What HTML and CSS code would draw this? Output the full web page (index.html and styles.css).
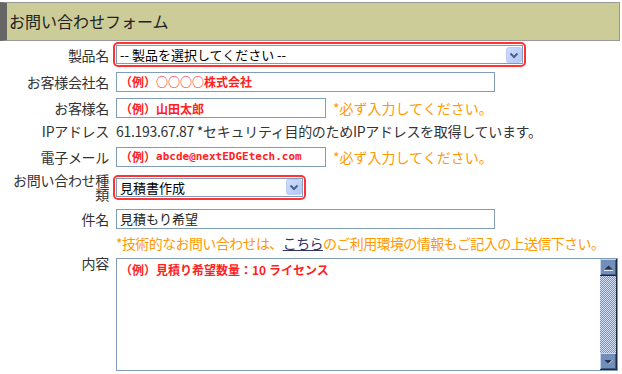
FILE: index.html
```html
<!DOCTYPE html>
<html lang="ja">
<head>
  <meta charset="UTF-8">
  <meta name="viewport" content="width=device-width, initial-scale=1.0">
  <link rel="stylesheet" href="styles.css">
</head>
<body>

  <h2 class="form-title">お問い合わせフォーム</h2>

  <form class="inquiry">
    <label class="label">製品名</label>
    <div class="field">
      <span class="required-box">
        <select class="select select-product">
          <option>-- 製品を選択してください --</option>
        </select>
      </span>
    </div>

    <label class="label">お客様会社名</label>
    <div class="field">
      <input class="text text-wide" type="text" placeholder="（例）○○○○株式会社">
    </div>

    <label class="label">お客様名</label>
    <div class="field">
      <input class="text text-short" type="text" placeholder="（例）山田太郎">
      <span class="must">*必ず入力してください。</span>
    </div>

    <label class="label">IPアドレス</label>
    <div class="field">
      <span class="ip">61.193.67.87 *セキュリティ目的のためIPアドレスを取得しています。</span>
    </div>

    <label class="label">電子メール</label>
    <div class="field">
      <span class="text text-short text-mail">
        <span class="mail-ex">（例）</span>abcde@nextEDGEtech.com
      </span>
      <span class="must">*必ず入力してください。</span>
    </div>

    <label class="label label-wrap">お問い合わせ種類</label>
    <div class="field">
      <span class="required-box">
        <select class="select select-kind">
          <option>見積書作成</option>
        </select>
      </span>
    </div>

    <label class="label">件名</label>
    <div class="field">
      <input class="text text-wide text-filled" type="text" value="見積もり希望">
    </div>

    <span class="label"></span>
    <div class="field">
      <span class="must note">*技術的なお問い合わせは、<a class="link" href="#">こちら</a>のご利用環境の情報もご記入の上送信下さい。</span>
    </div>

    <label class="label label-top">内容</label>
    <div class="field field-top">
      <div class="content-box">
        <textarea class="content" placeholder="（例）見積り希望数量：10 ライセンス"></textarea>
        <div class="scroll">
          <span class="scroll-btn scroll-up"></span>
          <span class="scroll-track"></span>
          <span class="scroll-btn scroll-down"></span>
        </div>
      </div>
    </div>
  </form>

</body>
</html>
```

FILE: styles.css
```css
body {
    font-family: "Noto Sans CJK JP", "DejaVu Sans", sans-serif;
    font-size: 14px;
    color: #333;
    margin: 0;
    width: 620px;
}

.form-title {
    margin: 2px 0 0 0;
    height: 37px;
    line-height: 36px;
    padding-left: 2px;
    font-size: 16px;
    font-weight: normal;
    color: #222;
    background: #cccc99;
    border: 1px solid #999;
    border-left: 7px solid #666;
}

.inquiry {
    display: grid;
    grid-template-columns: 109px 1fr;
    grid-template-rows: 27px 27px 26px 20px 31px 30px 33px 16px auto;
    column-gap: 7px;
    align-items: center;
}

.label {
    text-align: right;
    line-height: 14px;
    letter-spacing: -0.3px;
}

.label-wrap {
    align-self: start;
    padding-top: 1px;
}

.label-top {
    align-self: start;
    padding-top: 5px;
}

.field {
    display: flex;
    align-items: center;
}

.field-top {
    align-self: start;
    padding-top: 7px;
}

.required-box {
    display: inline-flex;
    margin-left: -3px;
    padding: 1px;
    border: 2px solid #ff3333;
    border-radius: 5px;
}

.select {
    -webkit-appearance: none;
    appearance: none;
    height: 19px;
    margin: 0;
    padding: 0 0 0 3px;
    border: 1px solid #7f9db9;
    border-radius: 0;
    font-family: "Noto Sans CJK JP", sans-serif;
    font-size: 13px;
    line-height: 17px;
    color: #000;
    background: #fff url("data:image/svg+xml,%3Csvg xmlns='http://www.w3.org/2000/svg' width='16' height='16'%3E%3Cdefs%3E%3ClinearGradient id='g' x1='0' y1='0' x2='1' y2='1'%3E%3Cstop offset='0' stop-color='%23cfdcfd'/%3E%3Cstop offset='1' stop-color='%23b3c7f6'/%3E%3C/linearGradient%3E%3C/defs%3E%3Crect x='0.5' y='0.5' width='15' height='15' rx='2' fill='url(%23g)' stroke='%23bccdf5'/%3E%3Cpath d='M4.5 6.5 L8 10 L11.5 6.5' fill='none' stroke='%234d6185' stroke-width='2'/%3E%3C/svg%3E") no-repeat right 0 center;
}

.select-product {
    width: 407px;
}

.select-kind {
    width: 187px;
}

.text {
    box-sizing: border-box;
    height: 20px;
    margin: 0;
    padding: 0 3px;
    border: 1px solid #7f9db9;
    font-family: "Noto Sans CJK JP", sans-serif;
    font-size: 12px;
    font-weight: bold;
    color: #ff2222;
    background: #fff;
    outline: none;
}

.text::placeholder {
    color: #ff2222;
    opacity: 1;
}

.text-wide {
    width: 379px;
}

.text-short {
    width: 210px;
}

.text-filled {
    font-size: 13px;
    font-weight: normal;
    color: #222;
}

.text-mail {
    display: inline-flex;
    align-items: center;
    font-family: "DejaVu Sans Mono", monospace;
    font-size: 11px;
    white-space: nowrap;
    overflow: hidden;
}

.mail-ex {
    font-family: "Noto Sans CJK JP", sans-serif;
    font-size: 12px;
}

.must {
    margin-left: 7px;
    color: #ff9900;
    white-space: nowrap;
}

.note {
    margin-left: 0;
    letter-spacing: -0.6px;
}

.link {
    color: #333366;
    text-decoration: underline;
}

.ip {
    white-space: nowrap;
    letter-spacing: -0.3px;
}

.content-box {
    display: flex;
    width: 502px;
    height: 113px;
    box-sizing: border-box;
    border: 1px solid #7f9db9;
    background: #fff;
}

.content {
    flex: 1;
    margin: 0;
    padding: 2px 3px;
    border: 0;
    font-family: "Noto Sans CJK JP", sans-serif;
    font-size: 12px;
    font-weight: bold;
    color: #ff2222;
    resize: none;
    overflow: hidden;
    outline: none;
}

.content::placeholder {
    color: #ff2222;
    opacity: 1;
}

.scroll {
    display: flex;
    flex-direction: column;
    width: 17px;
    background: #1c2a40;
}

.scroll-track {
    flex: 1;
    margin-right: 1px;
    background: repeating-conic-gradient(#6d8fcc 0 25%, #d6e3f8 0 50%) 0 0 / 2px 2px;
}

.scroll-btn {
    display: block;
    height: 17px;
}

.scroll-up {
    background: url("data:image/svg+xml,%3Csvg xmlns='http://www.w3.org/2000/svg' width='17' height='17'%3E%3Crect width='17' height='17' fill='%231c2a40'/%3E%3Crect width='16' height='16' fill='%23c9d5ea'/%3E%3Crect x='1' y='1' width='15' height='15' fill='%23425a80'/%3E%3Crect x='1' y='1' width='14' height='14' fill='%23728fbb'/%3E%3Cpath d='M4.5 10.5 L12.5 10.5 L8.5 6.5 Z' fill='%23243450'/%3E%3Crect x='4' y='11' width='9' height='1' fill='%23dfe7f3'/%3E%3C/svg%3E") no-repeat;
}

.scroll-down {
    background: url("data:image/svg+xml,%3Csvg xmlns='http://www.w3.org/2000/svg' width='17' height='17'%3E%3Crect width='17' height='17' fill='%231c2a40'/%3E%3Crect width='16' height='16' fill='%23c9d5ea'/%3E%3Crect x='1' y='1' width='15' height='15' fill='%23425a80'/%3E%3Crect x='1' y='1' width='14' height='14' fill='%23728fbb'/%3E%3Cpath d='M4.5 7 L12.5 7 L8.5 11 Z' fill='%23243450'/%3E%3Cpath d='M8.5 11 L12.5 7' stroke='%23dfe7f3' stroke-width='1'/%3E%3C/svg%3E") no-repeat;
}
```
